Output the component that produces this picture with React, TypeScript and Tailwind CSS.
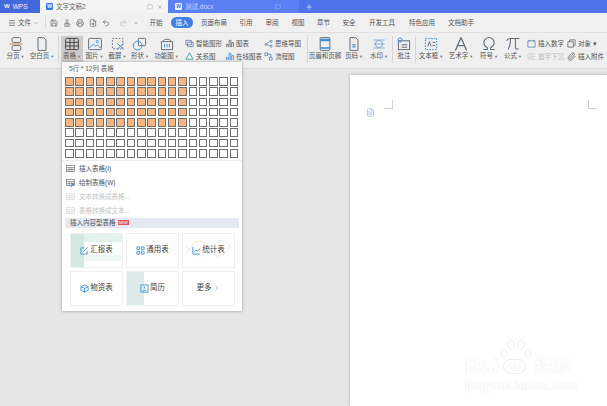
import { FileText, Menu, Paperclip, Plus, Printer, Redo2, Save, Undo2, X, ChevronRight, ChevronDown, MessageSquare, FileSearch, Stamp } from "lucide-react"
import type { ReactNode } from "react"

const FONT = "font-['Liberation_Sans','Noto_Sans_CJK_SC',sans-serif]"

const menus = [
  { label: "开始", w: "w-[26px]" },
  { label: "插入", w: "w-[26px]", active: true },
  { label: "页面布局", w: "w-[38px]" },
  { label: "引用", w: "w-[26px]" },
  { label: "审阅", w: "w-[26px]" },
  { label: "视图", w: "w-[26px]" },
  { label: "章节", w: "w-[25px]" },
  { label: "安全", w: "w-[26px]" },
  { label: "开发工具", w: "w-[40px]" },
  { label: "特色应用", w: "w-[40px]" },
  { label: "文档助手", w: "w-[38px]" },
]

function Glyph({ children }: { children: ReactNode }) {
  return (
    <svg viewBox="0 0 20 20" className="h-[16px] w-[16px]" fill="none" stroke="#5f6b7a" strokeWidth="1.2">
      {children}
    </svg>
  )
}

function BigButton({ label, w, arrow = true, active, className = "", children }: { label: string; w: string; arrow?: boolean; active?: boolean; className?: string; children: ReactNode }) {
  return (
    <div className={`flex h-[26px] flex-col items-center ${w} ${className} ${active ? "bg-[#cbcbcb]" : ""}`}>
      <div className="flex h-[15px] items-center">{children}</div>
      <div className="h-[10px] whitespace-nowrap text-[6.5px] leading-[10px] text-[#555]">
        {label}
        {arrow && <span className="text-[4px] text-[#777]"> ▼</span>}
      </div>
    </div>
  )
}

function SmallItem({ label, d, color = "#5b7fb5", dim }: { label: string; d: string; color?: string; dim?: boolean }) {
  return (
    <div className={`flex h-[13px] items-center gap-[2px] whitespace-nowrap text-[6.5px] ${dim ? "text-[#bbb]" : "text-[#555]"}`}>
      <svg viewBox="0 0 10 10" className="h-[9px] w-[9px]" fill="none" stroke={dim ? "#c8c8c8" : color} strokeWidth="0.9">
        <path d={d} />
      </svg>
      {label}
    </div>
  )
}

function Sep() {
  return <div className="mx-[2px] h-[27px] w-px bg-[#d6d6d6]" />
}

function Ribbon() {
  return (
    <div className="flex h-[36px] items-start border-t border-[#e0e0e0] bg-[#efefef] pl-[3px] pt-[3px]">
      <BigButton label="分页" w="w-[25px]">
        <Glyph>
          <rect x="5" y="2" width="11" height="6" rx="2" />
          <rect x="5" y="12" width="11" height="6" rx="2" />
          <path d="M2 10h16" stroke="#d07a3a" />
        </Glyph>
      </BigButton>
      <BigButton label="空白页" w="w-[28px]">
        <Glyph>
          <path d="M5 2h7l3 3v13H5z" />
        </Glyph>
      </BigButton>
      <Sep />
      <BigButton label="表格" w="w-[22px]" active>
        <Glyph>
          <rect x="2" y="3" width="16" height="14" rx="1" stroke="#444" />
          <path d="M2 8h16M2 12.5h16M7.5 3v14M12.5 3v14" stroke="#444" />
        </Glyph>
      </BigButton>
      <BigButton label="图片" w="w-[23px]">
        <Glyph>
          <rect x="2" y="3" width="16" height="14" rx="1" />
          <path d="M3 15l5-5 3 3 2-2 4 4" stroke="#3a8fd8" />
          <circle cx="13" cy="7" r="1.4" stroke="#3a8fd8" />
        </Glyph>
      </BigButton>
      <BigButton label="截屏" w="w-[23px]">
        <Glyph>
          <rect x="3" y="3" width="13" height="13" strokeDasharray="2 2" />
          <path d="M9 9l8 8M17 9l-8 8" stroke="#3a8fd8" />
        </Glyph>
      </BigButton>
      <BigButton label="形状" w="w-[22px]">
        <Glyph>
          <rect x="8" y="3" width="9" height="9" rx="1" />
          <circle cx="7" cy="12" r="5.5" stroke="#3a8fd8" />
        </Glyph>
      </BigButton>
      <BigButton label="功能图" w="w-[31px]">
        <Glyph>
          <path d="M3 7h14v10H3zM5 7c0-4 10-4 10 0" />
          <path d="M7 10v4M10 10v4M13 10v4" stroke="#3a8fd8" />
        </Glyph>
      </BigButton>
      <div className="ml-[3px] flex w-[40px] flex-col pt-[1px]">
        <SmallItem label="智能图形" d="M1 1.500h6v5H1zM3 3.500h6v5H3z" />
        <SmallItem label="关系图" color="#3aa0a0" d="M5 1L9 8H1zM5 1v0" />
      </div>
      <div className="flex w-[39px] flex-col pt-[1px]">
        <SmallItem label="图表" color="#666" d="M1.500 9V6h2v3M4.500 9V1.500h2V9M7.500 9V4h2v5" />
        <SmallItem label="在线图表" color="#3a8fd8" d="M1.500 9V6h2v3M4.500 9V1.500h2V9M7.500 9V4h2v5" />
      </div>
      <div className="flex w-[41px] flex-col pt-[1px]">
        <SmallItem label="思维导图" d="M2 5a1 1 0 1 0 .01 0M8 1.500a1 1 0 1 0 .01 0M8 7a1 1 0 1 0 .01 0M3 5L7 2.500M3 6l4 2" />
        <SmallItem label="流程图" d="M1 1h3v3H1zM6 6h3v3H6zM4 2.500h3.500V6" />
      </div>
      <Sep />
      <BigButton label="页眉和页脚" w="w-[30px]" arrow={false}>
        <Glyph>
          <rect x="4" y="2" width="12" height="16" rx="1" />
          <path d="M4 5h12" stroke="#3a8fd8" strokeWidth="3" />
          <path d="M4 15h12" stroke="#3a8fd8" strokeWidth="2" />
        </Glyph>
      </BigButton>
      <BigButton label="页码" w="w-[28px]">
        <Glyph>
          <path d="M5 2h7l3 3v13H5z" />
          <path d="M8 11h4M8 13.500h4" stroke="#3a8fd8" strokeWidth="1.500" />
        </Glyph>
      </BigButton>
      <BigButton label="水印" w="w-[22px]">
        <Glyph>
          <path d="M3 5h14M3 15h14M3 10h14" stroke="#7fa8d8" />
          <circle cx="10" cy="10" r="4.5" stroke="#7fa8d8" />
        </Glyph>
      </BigButton>
      <Sep />
      <BigButton label="批注" w="w-[18px]" arrow={false}>
        <Glyph>
          <rect x="3" y="6" width="14" height="11" />
          <circle cx="5" cy="5" r="2.5" stroke="#3a8fd8" />
          <path d="M7 11h7M7 14h7" />
        </Glyph>
      </BigButton>
      <Sep />
      <BigButton label="文本框" w="w-[26px]">
        <Glyph>
          <rect x="3" y="3" width="14" height="14" strokeDasharray="2 1.5" stroke="#3a8fd8" />
          <path d="M6 13l2-6 2 6M12 8h3M12 12h3" />
        </Glyph>
      </BigButton>
      <BigButton label="艺术字" w="w-[28px]" className="ml-[3px]">
        <Glyph>
          <path d="M10 2l7 16M10 2L3 18M6.5 12h7" strokeWidth="1.6" />
        </Glyph>
      </BigButton>
      <BigButton label="符号" w="w-[22px]" className="ml-[3px]">
        <Glyph>
          <path d="M3 17h5v-2C5 13 3.500 11 3.500 8.500a6.500 6.500 0 0 1 13 0c0 2.500-1.500 4.500-4.500 6.500v2h5" strokeWidth="1.300" />
        </Glyph>
      </BigButton>
      <BigButton label="公式" w="w-[24px]" className="ml-[1px]">
        <Glyph>
          <path d="M2 6c1-2 2-3 4-3h12M7 3c0 6-1 10-3 14M13 3v11c0 2 1 3 4 2" strokeWidth="1.300" />
        </Glyph>
      </BigButton>
      <div className="ml-[2px] flex w-[40px] flex-col pt-[1px]">
        <SmallItem label="插入数字" d="M1 2h8v7H1zM3 1v2M7 1v2" />
        <SmallItem label="首字下沉" dim d="M1 2h4v4H1zM6 2h3M6 5h3M1 8h8" />
      </div>
      <div className="flex flex-col pt-[1px]">
        <SmallItem label="对象 ▾" color="#666" d="M1 3h6v6H1zM3 3V1h6v6H7" />
        <div className="flex h-[13px] items-center gap-[2px] whitespace-nowrap text-[6.5px] text-[#555]">
          <Paperclip className="h-[9px] w-[9px] text-[#666]" />
          插入附件
        </div>
      </div>
    </div>
  )
}

function TableGrid() {
  const cells = []
  for (let r = 0; r < 8; r++) {
    for (let c = 0; c < 17; c++) {
      const on = r < 5 && c < 12
      cells.push(<div key={`${r}-${c}`} className={`border border-[#6f6f6f] ${on ? "bg-[#f7b582]" : "bg-white"}`} />)
    }
  }
  return <div className="mx-[3px] grid grid-cols-[repeat(17,8.5px)] grid-rows-[repeat(8,8.5px)] gap-[1.8px]">{cells}</div>
}

function MenuRow({ label, dim, color }: { label: string; dim?: boolean; color?: string }) {
  return (
    <div className={`flex h-[14px] items-center gap-[4px] pl-[4px] text-[6.5px] ${dim ? "text-[#c4c4c4]" : "text-[#555]"}`}>
      <svg viewBox="0 0 10 10" className="h-[9px] w-[9px]" fill="none" stroke={dim ? "#d4d4d4" : "#666"} strokeWidth="0.7">
        <rect x="0.500" y="1.500" width="9" height="7" />
        <path d="M0.500 4h9M0.500 6.300h9M3.500 4v4.500M6.500 4v4.500" />
        {color && <path d="M5.500 9.500l3.500-3.500" stroke={color} strokeWidth="1.500" />}
      </svg>
      <span className="whitespace-nowrap">{label}</span>
    </div>
  )
}

function TemplateCard({ label, icon, children }: { label: ReactNode; icon?: ReactNode; children?: ReactNode }) {
  return (
    <div className="relative flex h-[35px] w-[53px] items-center justify-center gap-[1px] overflow-hidden border border-[#f0f0f0] bg-white text-[7.5px] text-[#444]">
      {children}
      {icon && <span className="relative flex">{icon}</span>}
      <span className="relative flex items-center whitespace-nowrap">{label}</span>
    </div>
  )
}

function CardIcon({ children }: { children: ReactNode }) {
  return (
    <svg viewBox="0 0 10 10" className="h-[9px] w-[9px]" fill="none" stroke="#4a9be8" strokeWidth="1.100">
      {children}
    </svg>
  )
}

function TablePopup() {
  return (
    <div className="absolute left-[62px] top-[62px] z-10 w-[180px] bg-white pb-[5px] shadow-[0_0_3px_rgba(0,0,0,0.35)]">
      <div className="flex h-[13px] items-center bg-[#f7f7f7] pl-[7px] text-[6.5px] text-[#666]">5行 * 12列 表格</div>
      <div className="pt-[2px]">
        <TableGrid />
      </div>
      <div className="mt-[2px] border-t border-[#eee] pt-[1px]">
        <MenuRow label="插入表格(I)" />
        <MenuRow label="绘制表格(W)" color="#3a8fd8" />
        <MenuRow label="文本转换成表格..." dim />
        <MenuRow label="表格转换成文本..." dim />
      </div>
      <div className="mx-[3px] flex h-[10px] items-center gap-[2px] bg-[#e5e8f0] pl-[5px] text-[6.5px] text-[#555]">
        插入内容型表格
        <span className="bg-[#e8534f] px-[1px] text-[4px] leading-[5px] text-white">NEW</span>
      </div>
      <div className="mt-[5px] grid grid-cols-[repeat(3,53px)] gap-x-[3px] gap-y-[3px] pl-[8px]">
        <TemplateCard
          label="汇报表"
          icon={
            <CardIcon>
              <path d="M8 5.500V9H1V2h4M4 6l4.500-4.500" />
            </CardIcon>
          }
        >
          <div className="absolute inset-x-0 top-0 h-[8px] bg-[#e2f1ea]" />
          <div className="absolute inset-x-0 top-[21px] h-[6px] bg-[#eef7f3]" />
          <div className="absolute bottom-0 left-0 top-0 w-[13px] bg-[#d3e9df]" />
        </TemplateCard>
        <TemplateCard
          label="通用表"
          icon={
            <CardIcon>
              <path d="M1 1h3v3H1zM6 1h3v3H6zM1 6h3v3H1zM6 6h3v3H6z" />
            </CardIcon>
          }
        />
        <TemplateCard
          label="统计表"
          icon={
            <CardIcon>
              <path d="M1 1v8h8M2.500 6.500l2-2 1.500 1L9 3" />
            </CardIcon>
          }
        >
          <svg viewBox="0 0 53 35" className="absolute inset-0" fill="none" strokeWidth="0.7">
            <path d="M3 22C12 4 20 4 28 16s14 8 22-6" stroke="#f7dcc4" />
            <path d="M3 12c10 14 20 14 28 2s12-8 19 0" stroke="#cfe4f7" />
          </svg>
        </TemplateCard>
        <TemplateCard
          label="物资表"
          icon={
            <CardIcon>
              <path d="M5 1l4 2v4L5 9 1 7V3zM1 3l4 2 4-2M5 5v4" />
            </CardIcon>
          }
        />
        <TemplateCard
          label="简历"
          icon={
            <CardIcon>
              <rect x="1" y="1" width="8" height="8" />
              <path d="M3 7h4M5 3v2" />
            </CardIcon>
          }
        >
          <div className="absolute bottom-0 left-0 top-0 w-[17px] bg-[#dcebea]" />
        </TemplateCard>
        <TemplateCard
          label={
            <>
              更多
              <ChevronRight className="ml-[1px] h-[8px] w-[8px] text-[#999]" />
            </>
          }
        />
      </div>
    </div>
  )
}

function Watermark() {
  return (
    <div className="absolute left-[465px] top-[340px] h-[52px] w-[110px] text-white [text-shadow:0_0_1px_#dcdcdc]">
      <svg viewBox="0 0 32 22" className="absolute left-[35px] top-0 h-[22px] w-[32px]" fill="#fff" stroke="#ececec" strokeWidth="0.800">
        <ellipse cx="4" cy="13" rx="3" ry="4" />
        <ellipse cx="11" cy="5" rx="3.500" ry="4.500" />
        <ellipse cx="21" cy="5" rx="3.500" ry="4.500" />
        <ellipse cx="28" cy="13" rx="3" ry="4" />
      </svg>
      <span className="absolute left-0 top-[14px] text-[22px] font-bold leading-[24px]">Bai</span>
      <span className="absolute left-[38px] top-[19px] rounded-full border border-[#ececec] bg-white px-[3px] text-[12px] font-bold leading-[13px]">du</span>
      <span className="absolute left-[70px] top-[16px] text-[18px] font-bold leading-[20px]">经验</span>
      <span className="absolute left-0 top-[39px] whitespace-nowrap text-[13px] font-bold leading-[14px]">jingyan.baidu.com</span>
    </div>
  )
}

export default function App() {
  return (
    <div className={`relative flex h-[406px] w-[607px] flex-col overflow-hidden bg-[#e6e6e6] ${FONT}`}>
      {/* title bar */}
      <div className="flex h-[13px] items-stretch bg-[#4f74ea] text-[6.5px]">
        <div className="flex w-[40px] items-center gap-[3px] bg-[#4469dc] pl-[4px] text-white/90">
          <span className="text-[6px] font-bold">W</span> WPS
        </div>
        <div className="flex w-[128px] items-center bg-[#f4f4f4] pl-[6px] text-[#666]">
          <div className="mr-[3px] flex h-[7px] w-[7px] items-center justify-center rounded-[1px] bg-[#2f7de1] text-[5px] font-bold text-white">W</div>
          <span>文字文稿2</span>
          <MessageSquare className="ml-auto h-[6px] w-[6px] text-[#aaa]" />
          <X className="ml-[4px] mr-[5px] h-[6px] w-[6px] text-[#888]" />
        </div>
        <div className="flex w-[131px] items-center bg-[#5a80f4] pl-[7px] text-white/70">
          <div className="mr-[3px] flex h-[7px] w-[7px] items-center justify-center rounded-[1px] bg-[#e8f0ff] text-[5px] font-bold text-[#2f7de1]">W</div>
          <span>测试.docx</span>
          <MessageSquare className="ml-auto mr-[18px] h-[6px] w-[6px] text-white/40" />
        </div>
        <Plus className="ml-[6px] h-[8px] w-[8px] self-center text-white/80" />
      </div>
      {/* menu row */}
      <div className="flex h-[19px] items-center bg-[#f0f0f0] pl-[8px] text-[6.5px] text-[#555]">
        <Menu className="h-[8px] w-[8px]" />
        <span className="ml-[2px] w-[13px]">文件</span>
        <ChevronDown className="ml-[2px] h-[6px] w-[6px] text-[#888]" />
        <div className="ml-[6px] mr-[4px] h-[11px] w-px bg-[#d8d8d8]" />
        <div className="flex items-center gap-[5px] text-[#666]">
          <Save className="h-[8px] w-[8px]" />
          <Stamp className="h-[8px] w-[8px]" />
          <Printer className="h-[8px] w-[8px]" />
          <FileSearch className="h-[8px] w-[8px]" />
          <Undo2 className="h-[8px] w-[8px]" />
          <Redo2 className="ml-[4px] h-[8px] w-[8px] text-[#bbb]" />
          <ChevronDown className="ml-[1px] h-[6px] w-[6px]" />
        </div>
        <div className="ml-[4px] flex items-center">
          {menus.map((m) => (
            <div key={m.label} className={`flex items-center justify-center ${m.w}`}>
              <span className={`flex h-[11px] items-center justify-center ${m.active ? "w-[22px] rounded-full bg-[#3f7fe8] text-white" : ""}`}>{m.label}</span>
            </div>
          ))}
        </div>
      </div>
      <Ribbon />
      {/* document area */}
      <div className="flex flex-1 justify-end border-t border-[#d8d8d8] pt-[6px]">
        <div className="relative w-[257px] bg-white shadow-[0_0_3px_rgba(0,0,0,0.25)]">
          <div className="absolute left-[34px] top-[25px] h-[9px] w-[9px] border-b border-r border-[#cfcfcf]" />
          <div className="absolute left-[238px] top-[25px] h-[9px] w-[9px] border-b border-l border-[#cfcfcf]" />
          <FileText className="absolute left-[16px] top-[33px] h-[9px] w-[9px] text-[#9db9e4]" />
        </div>
      </div>
      <TablePopup />
      <Watermark />
    </div>
  )
}
